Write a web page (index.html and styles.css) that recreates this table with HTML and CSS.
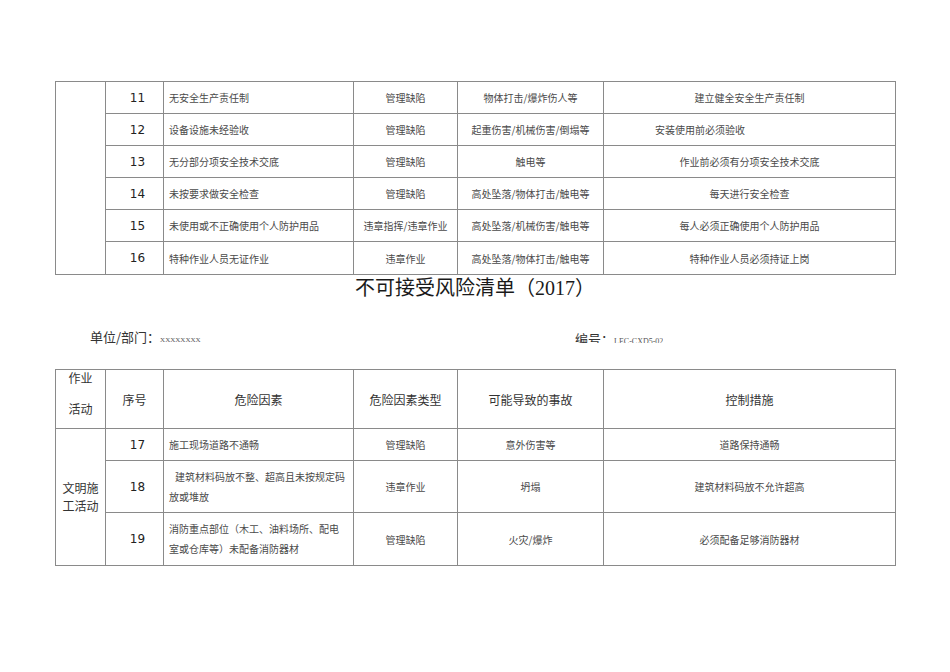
FILE: index.html
```html
<!DOCTYPE html>
<html lang="zh-CN">
<head>
<meta charset="utf-8">
<title>不可接受风险清单（2017）</title>
<link rel="stylesheet" href="styles.css">
</head>
<body>
<div class="page">
  <table class="grid">
    <colgroup>
      <col class="c1"><col class="c2"><col class="c3"><col class="c4"><col class="c5"><col class="c6">
    </colgroup>
    <tbody>
      <tr class="r32">
        <td class="act" rowspan="6"></td>
        <td class="num">11</td>
        <td class="txt">无安全生产责任制</td>
        <td class="ctr">管理缺陷</td>
        <td class="ctr">物体打击/爆炸伤人等</td>
        <td class="ctr">建立健全安全生产责任制</td>
      </tr>
      <tr class="r32">
        <td class="num">12</td>
        <td class="txt">设备设施未经验收</td>
        <td class="ctr">管理缺陷</td>
        <td class="ctr">起重伤害/机械伤害/倒塌等</td>
        <td class="txt indent">安装使用前必须验收</td>
      </tr>
      <tr class="r32">
        <td class="num">13</td>
        <td class="txt">无分部分项安全技术交底</td>
        <td class="ctr">管理缺陷</td>
        <td class="ctr">触电等</td>
        <td class="ctr">作业前必须有分项安全技术交底</td>
      </tr>
      <tr class="r32">
        <td class="num">14</td>
        <td class="txt">未按要求做安全检查</td>
        <td class="ctr">管理缺陷</td>
        <td class="ctr">高处坠落/物体打击/触电等</td>
        <td class="ctr">每天进行安全检查</td>
      </tr>
      <tr class="r32">
        <td class="num">15</td>
        <td class="txt">未使用或不正确使用个人防护用品</td>
        <td class="ctr">违章指挥/违章作业</td>
        <td class="ctr">高处坠落/机械伤害/触电等</td>
        <td class="ctr">每人必须正确使用个人防护用品</td>
      </tr>
      <tr class="r33">
        <td class="num">16</td>
        <td class="txt">特种作业人员无证作业</td>
        <td class="ctr">违章作业</td>
        <td class="ctr">高处坠落/物体打击/触电等</td>
        <td class="ctr">特种作业人员必须持证上岗</td>
      </tr>
    </tbody>
  </table>

  <h1 class="title">不可接受风险清单（2017）</h1>

  <div class="meta">
    <div class="unit">单位/部门：<span class="xx">XXXXXXXX</span></div>
    <div class="code">编号：<span class="codeval">LEC-CXD5-02</span></div>
  </div>

  <table class="grid">
    <colgroup>
      <col class="c1"><col class="c2"><col class="c3"><col class="c4"><col class="c5"><col class="c6">
    </colgroup>
    <thead>
      <tr class="head">
        <th class="stack"><div>作业</div><div class="second">活动</div></th>
        <th>序号</th>
        <th>危险因素</th>
        <th>危险因素类型</th>
        <th>可能导致的事故</th>
        <th>控制措施</th>
      </tr>
    </thead>
    <tbody>
      <tr class="r32">
        <td class="group" rowspan="3">文明施<br>工活动</td>
        <td class="num">17</td>
        <td class="txt">施工现场道路不通畅</td>
        <td class="ctr">管理缺陷</td>
        <td class="ctr">意外伤害等</td>
        <td class="ctr">道路保持通畅</td>
      </tr>
      <tr class="r52">
        <td class="num">18</td>
        <td class="txt multi"><span class="lead">建筑材料码放不整、超高且未按规定码</span><br>放或堆放</td>
        <td class="ctr">违章作业</td>
        <td class="ctr">坍塌</td>
        <td class="ctr">建筑材料码放不允许超高</td>
      </tr>
      <tr class="r53">
        <td class="num">19</td>
        <td class="txt multi">消防重点部位（木工、油料场所、配电<br>室或仓库等）未配备消防器材</td>
        <td class="ctr">管理缺陷</td>
        <td class="ctr">火灾/爆炸</td>
        <td class="ctr">必须配备足够消防器材</td>
      </tr>
    </tbody>
  </table>
</div>
</body>
</html>
```

FILE: styles.css
```css
html, body {
  margin: 0;
  padding: 0;
  background: #ffffff;
}

body {
  font-family: "Noto Sans CJK SC", "Noto Sans", sans-serif;
  color: #444444;
}

.page {
  padding: 81px 0 0 55px;
  width: 840px;
}

.grid {
  border-collapse: collapse;
  table-layout: fixed;
  width: 840px;
}

.c1 { width: 50px; }
.c2 { width: 58px; }
.c3 { width: 190px; }
.c4 { width: 104px; }
.c5 { width: 146px; }
.c6 { width: 292px; }

.grid td,
.grid th {
  border: 1px solid #8a8a8a;
  padding: 0;
  vertical-align: middle;
  overflow: hidden;
  white-space: nowrap;
}

.r32 { height: 32px; }
.r33 { height: 33px; }
.r52 { height: 52px; }
.r53 { height: 53px; }
.head { height: 59px; }

.num {
  font-family: "DejaVu Sans", "Noto Sans", sans-serif;
  font-size: 12px;
  color: #222222;
  text-align: center;
  padding-left: 6px !important;
}

.txt {
  font-size: 10px;
  text-align: left;
  padding-left: 5px !important;
  color: #4a4a4a;
}

.ctr {
  font-size: 10px;
  text-align: center;
  color: #4a4a4a;
}

.indent {
  padding-left: 51px !important;
}

.multi {
  line-height: 20px;
}

.lead {
  padding-left: 6px;
}

.grid th {
  font-weight: normal;
  font-size: 12px;
  color: #333333;
  text-align: center;
}

.grid th.stack {
  vertical-align: top;
  line-height: 16px;
  font-size: 12px;
}

.stack .second {
  margin-top: 15px;
}

.group {
  font-size: 12px;
  line-height: 18px;
  text-align: center;
  color: #333333;
}

.title {
  margin: 0;
  height: 26px;
  line-height: 26px;
  font-family: "Liberation Serif", "Noto Sans CJK SC", serif;
  font-size: 20px;
  font-weight: normal;
  color: #1a1a1a;
  text-align: center;
  width: 840px;
  padding-top: 0;
}

.meta {
  display: flex;
  align-items: flex-start;
  padding-left: 35px;
  margin-top: 28px;
  margin-bottom: 24px;
  height: 16px;
}

.unit {
  width: 485px;
  font-size: 13px;
  line-height: 16px;
  color: #333333;
}

.xx {
  font-family: "Liberation Serif", serif;
  font-size: 7px;
  color: #555555;
}

.code {
  font-size: 13px;
  line-height: 16px;
  height: 12px;
  overflow: hidden;
  color: #333333;
  margin-top: 2px;
}

.codeval {
  font-family: "Liberation Serif", serif;
  font-size: 8px;
  color: #555555;
}
```
